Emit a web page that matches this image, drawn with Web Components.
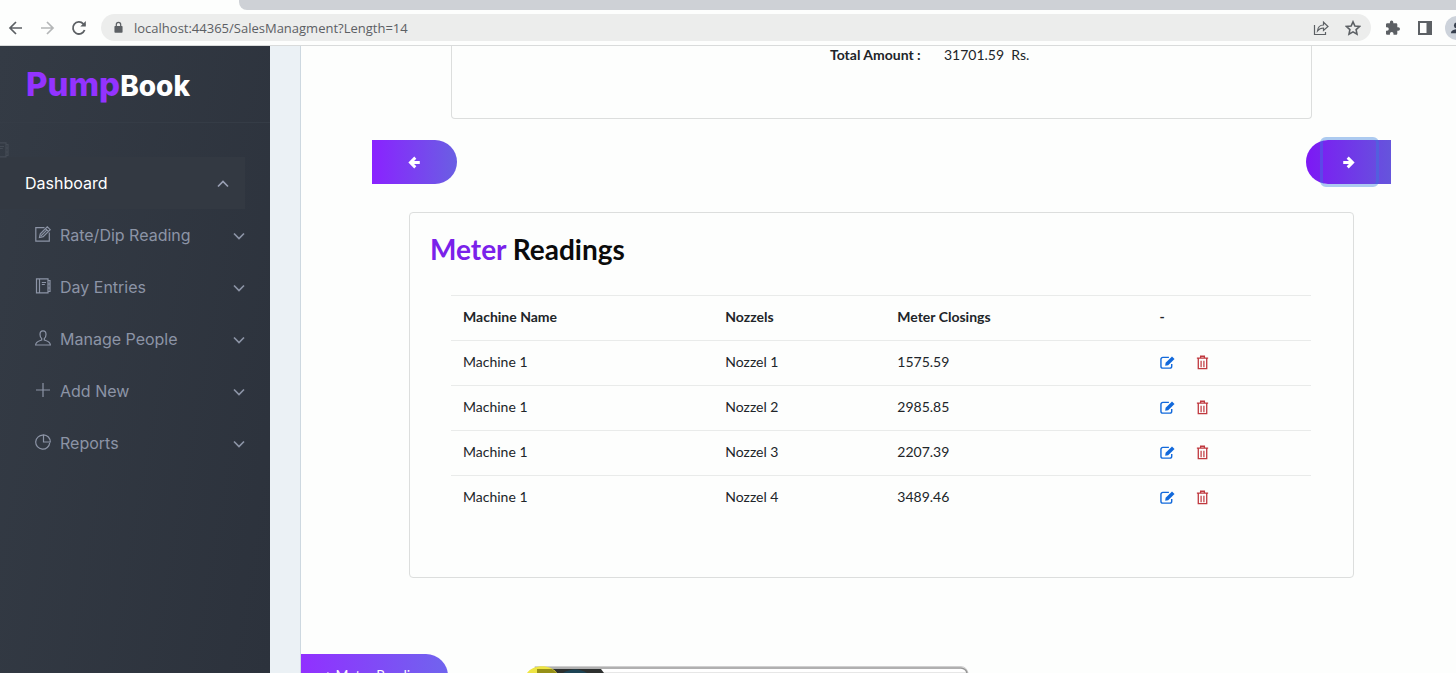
<!DOCTYPE html>
<html lang="en">
<head>
<meta charset="utf-8">
<meta name="viewport" content="width=device-width, initial-scale=1">
<title>PumpBook</title>
<style>
html, body { margin: 0; height: 100%; }
body { font-family: Lato, sans-serif; font-size: 14px; color: #212529; background: #fdfefd; overflow: hidden; }
</style>
</head>
<body>
<pump-app></pump-app>
<script>
const define = (name, html, setup) => {
  const template = document.createElement('template');
  template.innerHTML = html;
  customElements.define(name, class extends HTMLElement {
    connectedCallback() {
      if (this.shadowRoot) return;
      this.attachShadow({ mode: 'open' }).append(template.content.cloneNode(true));
      if (setup) setup(this, this.shadowRoot);
    }
  });
};

const ICONS = {
  back: '<path d="M14 8H2M8 2L2 8l6 6" stroke-width="1.7"/>',
  forward: '<path d="M2 8h12M8 2l6 6-6 6" stroke-width="1.7"/>',
  reload: '<path d="M13.6 10A6 6 0 1 1 12.3 3.8L14 5.5" stroke-width="1.8"/><path d="M14.8 1v5.5H9.3z" fill="currentColor" stroke="none"/>',
  lock: '<rect x="3" y="6" width="10" height="8.5" rx="1" fill="currentColor" stroke="none"/><path d="M5.3 7V4.4a2.7 2.7 0 0 1 5.4 0V7" stroke-width="1.5"/>',
  share: '<path d="M1.5 5v9.500h11v-2.500M4.500 11c.4-4 2.500-6 6-6V2.200L15 6.500l-4.500 4V8C8 8 6 9 4.500 11z" stroke-width="1.200"/>',
  star: '<path d="M8 1.800l1.900 4.200 4.600.5-3.400 3.100.9 4.500L8 11.800l-4 2.300.9-4.500L1.500 6.500l4.600-.5z" stroke-width="1.600"/>',
  puzzle: '<path d="M13.300 7.300h-1V4.600c0-.8-.6-1.300-1.300-1.300H8.300v-1a1.700 1.700 0 0 0-3.400 0v1H2.300C1.500 3.300 1 3.900 1 4.600v2.600h1a1.800 1.800 0 0 1 0 3.600H1v2.600c0 .8.600 1.300 1.300 1.300h2.600v-1a1.800 1.800 0 0 1 3.600 0v1H11c.8 0 1.300-.6 1.300-1.300v-2.700h1a1.700 1.700 0 0 0 0-3.400z" fill="currentColor" stroke="none"/>',
  panel: '<rect x="2" y="2" width="12" height="12" stroke-width="2"/><path d="M9.500 2H14v12H9.500z" fill="currentColor" stroke="none"/>',
  edit: '<path d="M9.500 1.700H.8v13.500h13.500V6.500"/><path d="M4.500 11.500l.8-3.700L12.300.8l2.900 2.900-7 7zM10.500 2.600l2.900 2.900M6 9.800l5.500-5.500"/>',
  book: '<path d="M1.500 .8h11.500v14H1.500zM4.500 .8v14M13 2.500h2v3.500h-2M15 6v4h-2M15 10v3.500h-2M6.800 4.500h4.200M6.800 6.500h3"/>',
  person: '<path d="M8 .8C5.700 .8 5 2.500 5 4.500c0 2 .7 3.200 1.700 4V10C4 11 .8 11.200 .6 15h14.800C15.200 11.200 12 11 9.300 10V8.500c1-.8 1.700-2 1.700-4C11 2.500 10.300 .8 8 .8z"/>',
  plus: '<path d="M8 1v14M1 8h14"/>',
  pie: '<path d="M8.300 1.200A7 7 0 1 0 14.700 8.700"/><path d="M8.500 .8v7.200h6.800A7 7 0 0 0 8.500 .8z"/>',
  down: '<path d="M3 5.500l5 5 5-5" stroke-width="1.700"/>',
  up: '<path d="M3 10.500l5-5 5 5" stroke-width="1.700"/>',
  arrowLeft: '<path d="M14.500 8H4M9 2L3 8l6 6" stroke-width="3.600"/>',
  arrowRight: '<path d="M1.500 8H12M7 2l6 6-6 6" stroke-width="3.600"/>',
  pencil: '<path d="M9.500 2.500H3A2 2 0 0 0 1 4.500v7.500a2 2 0 0 0 2 2h7.500a2 2 0 0 0 2-2V9.500" stroke-width="1.500"/><path d="M5.500 11.500l.5-3.200L12.800 1.500l2.700 2.700-6.800 6.800z" fill="currentColor" stroke="none"/>',
  trash: '<path d="M3.500 4v10.500h9V4M2 3.300h12M6 3V1.300h4V3" stroke-width="1.400"/><path d="M6.500 6v7M9.500 6v7" stroke-width="1.300"/>',
  user: '<circle cx="8" cy="5" r="3.500" fill="currentColor" stroke="none"/><path d="M1 14c0-6 14-6 14 0z" fill="currentColor" stroke="none"/>'
};

define('ui-icon', `<style>
:host { display: inline-flex; width: 16px; height: 16px; flex: none; }
svg { width: 100%; height: 100%; }
</style><svg viewBox="0 0 16 16" fill="none" stroke="currentColor" stroke-width="1.2" aria-hidden="true"></svg>`,
(el, root) => { root.querySelector('svg').innerHTML = ICONS[el.getAttribute('name')]; });

define('browser-bar', `<style>
:host { display: block; flex: none; background: #fdfefd; border-bottom: 1px solid #d9dbdb; color: #5c6064; }
.tabs { height: 10px; margin-left: 239px; background: #ced1d6; border-bottom-left-radius: 8px; }
.row { display: flex; align-items: center; height: 35px; padding-left: 7px; overflow: hidden; }
button { all: unset; display: flex; justify-content: center; width: 32px; flex: none; }
.nav { width: 94px; display: flex; flex: none; }
.nav button:first-child { width: 18px; margin-right: 7px; }
.nav button:nth-child(2) { width: 30px; margin-right: 1px; }
.address { flex: 1; min-width: 0; display: flex; align-items: center; height: 27px; border-radius: 14px; background: #ecedec; padding: 0 2px 0 11px; box-sizing: border-box; }
.address ui-icon[name=lock] { width: 13px; height: 13px; margin-right: 9px; }
input { all: unset; flex: 1; min-width: 0; font: 13px "Open Sans", sans-serif; color: #5c6064; }
.ext { display: flex; align-items: center; width: 85px; flex: none; }
.ext button { width: 32px; margin-left: 6px; }
.ext button + button { margin-left: 0; }
.dim { opacity: .45; }
.ext .avatar { width: 24px; height: 24px; margin-left: 4px; border-radius: 50%; background: #cdd3db; color: #37404e; align-items: center; }
.avatar ui-icon { width: 14px; }
</style>
<div class="tabs"></div>
<div class="row">
  <div class="nav">
    <button aria-label="Back"><ui-icon name="back"></ui-icon></button>
    <button class="dim" aria-label="Forward"><ui-icon name="forward"></ui-icon></button>
    <button aria-label="Reload"><ui-icon name="reload"></ui-icon></button>
  </div>
  <div class="address">
    <ui-icon name="lock"></ui-icon>
    <input aria-label="Address" value="localhost:44365/SalesManagment?Length=14">
    <button aria-label="Share"><ui-icon name="share"></ui-icon></button>
    <button aria-label="Bookmark"><ui-icon name="star"></ui-icon></button>
  </div>
  <div class="ext">
    <button aria-label="Extensions"><ui-icon name="puzzle"></ui-icon></button>
    <button aria-label="Side panel"><ui-icon name="panel"></ui-icon></button>
    <button class="avatar" aria-label="Profile"><ui-icon name="user"></ui-icon></button>
  </div>
</div>`);

define('nav-item', `<style>
:host { display: block; }
a { display: flex; align-items: center; height: 52px; box-sizing: border-box; padding: 0 23px 0 35px; color: #8c94a6; text-decoration: none; font-size: 16px; }
.label { flex: 1; margin-left: 9px; white-space: nowrap; }
.lead { margin-bottom: 2px; }
.chev { margin-top: 2px; }
:host([active]) a { margin-right: 25px; padding: 0 14px 0 25px; background: #333942; color: #fff; }
:host([active]) .label { margin-left: 0; }
:host([active]) .chev { color: #9aa0b4; }
</style><a href="#"><ui-icon class="lead" name="plus"></ui-icon><span class="label"><slot></slot></span><ui-icon class="chev" name="down"></ui-icon></a>`,
(el, root) => {
  const active = el.hasAttribute('active');
  const [lead, chev] = ['.lead', '.chev'].map(s => root.querySelector(s));
  const swap = (node, name) => {
    const icon = document.createElement('ui-icon');
    icon.setAttribute('name', name);
    icon.className = node.className;
    node.replaceWith(icon);
  };
  active ? lead.remove() : swap(lead, el.getAttribute('icon'));
  swap(chev, active ? 'up' : 'down');
});

define('side-nav', `<style>
:host { display: block; width: 270px; flex: none; overflow: hidden; background: linear-gradient(100deg, #343b45, #2c323c); font-family: Inter, sans-serif; }
.brand { height: 77px; display: flex; align-items: baseline; box-sizing: border-box; padding: 18px 26px 0; border-bottom: 1px solid #353c46; color: #fff; font-weight: 800; font-size: 28px; line-height: 40px; text-decoration: none; }
.brand span { color: #9333ff; font-size: 33px; }
.ghost { height: 34px; display: flex; align-items: center; color: #505761; }
.ghost ui-icon { margin: 20px 0 0 -7px; opacity: .6; }
</style>
<a class="brand" href="#"><span>Pump</span>Book</a>
<div class="ghost"><ui-icon name="book"></ui-icon></div>
<nav>
  <nav-item active>Dashboard</nav-item>
  <nav-item icon="edit">Rate/Dip Reading</nav-item>
  <nav-item icon="book">Day Entries</nav-item>
  <nav-item icon="person">Manage People</nav-item>
  <nav-item icon="plus">Add New</nav-item>
  <nav-item icon="pie">Reports</nav-item>
</nav>`);

define('pill-button', `<style>
:host { display: block; }
button { all: unset; box-sizing: border-box; position: relative; display: flex; align-items: center; justify-content: center; width: 85px; height: 44px; color: #fff; background: linear-gradient(90deg, #8a22ff, #6a5fe3); border-radius: 0 22px 22px 0; }
:host([side=right]) button { border-radius: 22px 0 0 22px; background: linear-gradient(90deg, #7d18f5, #6555dc); }
:host([wide]) button { width: 147px; padding-bottom: 4px; background: linear-gradient(90deg, #9130ff, #7064ee); }
:host([focused]) button::after { content: ""; position: absolute; inset: -3px 12px -3px 14px; border: 3px solid rgba(50, 125, 220, .4); border-radius: 6px; }
::slotted(ui-icon) { width: 13px; height: 13px; }
</style><button><slot></slot></button>`,
(el, root) => root.querySelector('button').setAttribute('aria-label', el.getAttribute('label')));

define('panel-card', `<style>
:host { display: block; box-sizing: border-box; border: 1px solid #dcdedd; border-radius: 4px; background: #fdfefd; }
</style><slot></slot>`);

define('meter-table', `<style>
:host { display: block; }
table { width: 100%; border-collapse: collapse; table-layout: fixed; font-size: 14px; line-height: 20px; }
th, td { height: 20px; padding: 11px 12px 13px; border-top: 1px solid #e9ebea; text-align: left; white-space: nowrap; }
th { font-weight: 700; }
.wide { width: 30.5%; }
.mid { width: 20%; }
.actions { display: flex; align-items: center; gap: 20px; }
button { all: unset; display: flex; color: #1269db; }
button + button { color: #c0393f; }
ui-icon { width: 15px; height: 15px; }
</style>
<table>
  <colgroup><col class="wide"><col class="mid"><col class="wide"><col></colgroup>
  <thead><tr><th>Machine Name</th><th>Nozzels</th><th>Meter Closings</th><th>-</th></tr></thead>
  <tbody></tbody>
</table>`,
(el, root) => {
  const rows = [['Machine 1', 'Nozzel 1', '1575.59'], ['Machine 1', 'Nozzel 2', '2985.85'], ['Machine 1', 'Nozzel 3', '2207.39'], ['Machine 1', 'Nozzel 4', '3489.46']];
  root.querySelector('tbody').innerHTML = rows.map(r => `<tr>${r.map(c => `<td>${c}</td>`).join('')}<td><div class="actions"><button aria-label="Edit"><ui-icon name="pencil"></ui-icon></button><button aria-label="Delete"><ui-icon name="trash"></ui-icon></button></div></td></tr>`).join('');
});

define('dock-preview', `<style>
:host { position: absolute; left: 226px; bottom: 0; width: 442px; height: 7px; }
svg { display: block; width: 100%; height: 100%; }
</style><svg viewBox="0 0 442 7" aria-hidden="true">
<path d="M8 .5H434Q440 1 441 7H8z" fill="#fff" stroke="#cfcfcf" stroke-width="1"/>
<path d="M8 2H434Q439 2.500 440 7" fill="none" stroke="#969696" stroke-width="1.500"/>
<path d="M10 3H74L77 7H10z" fill="#2d302f"/>
<path d="M36 7a18 14 0 0 1 24 0z" fill="#1d4455"/>
<path d="M0 7C6-2 24-2 30 7z" fill="#eee544"/><path d="M10 3h15l5 4H10z" fill="#969017"/>
</svg>`);

define('sales-page', `<style>
:host { position: relative; display: block; flex: 1; min-width: 0; overflow: hidden; border-left: 1px solid #cdd8e0; background: #fdfefd; }
.content { padding: 0 65px 0 71px; }
.total { height: 73px; margin: 0 79px; border-top: 0; border-radius: 0 0 4px 4px; }
dl { display: grid; grid-template-columns: 114px 1fr; margin: 0; padding-left: 44%; line-height: 18px; }
dt { font-weight: 700; }
dd { margin: 0; white-space: pre; }
.pager { display: flex; justify-content: space-between; padding: 21px 0 28px; }
.readings { margin: 0 37px; padding: 16px 42px 57px 41px; }
h2 { margin: 0 -21px; padding-bottom: 26px; font-size: 28px; line-height: 40px; font-weight: 700; color: #0b0b0b; }
h2 span { color: #7a21ea; }
.foot { margin-top: 76px; }
</style>
<main>
  <div class="content">
    <panel-card class="total"><dl><dt>Total Amount :</dt><dd>31701.59  Rs.</dd></dl></panel-card>
    <div class="pager">
      <pill-button label="Previous"><ui-icon name="arrowLeft"></ui-icon></pill-button>
      <pill-button side="right" focused label="Next"><ui-icon name="arrowRight"></ui-icon></pill-button>
    </div>
    <panel-card class="readings">
      <h2><span>Meter</span> Readings</h2>
      <meter-table></meter-table>
    </panel-card>
  </div>
  <pill-button class="foot" wide label="Add meter reading">+ Meter Reading</pill-button>
</main>
<dock-preview></dock-preview>`);

define('pump-app', `<style>
:host { display: flex; flex-direction: column; height: 100vh; overflow: hidden; }
.body { display: flex; flex: 1; min-height: 0; }
.gutter { width: 30px; flex: none; background: #ebf1f5; }
</style>
<browser-bar></browser-bar>
<div class="body"><side-nav></side-nav><div class="gutter"></div><sales-page></sales-page></div>`);
</script>
</body>
</html>
